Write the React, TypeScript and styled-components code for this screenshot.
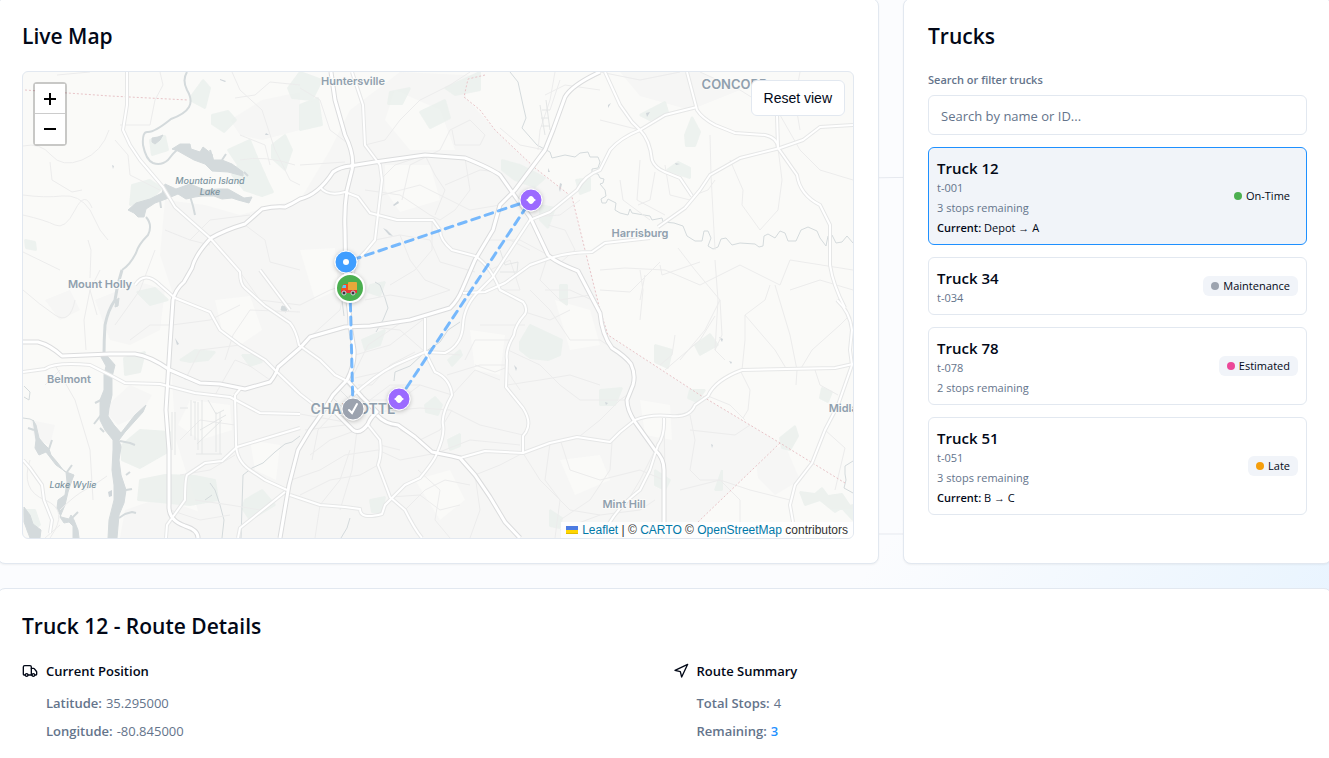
import React, { useState } from "react";
import styled, { createGlobalStyle, css } from "styled-components";
import { Navigation, Truck } from "lucide-react";

const ink = "#020817";
const muted = "#64748b";
const line = "#e2e8f0";
const primary = "#1e90ff";
const sans = '"Open Sans", "Noto Sans", "Segoe UI", sans-serif';

const GlobalStyle = createGlobalStyle`
  *, *::before, *::after { box-sizing: border-box; }
  body {
    margin: 0;
    font-family: ${sans};
    font-size: 13px;
    line-height: 20px;
    color: ${ink};
    background: #fcfdff;
  }
  h2, h3, p, ul, dl, dd { margin: 0; padding: 0; }
  ul { list-style: none; }
  button, input { font: inherit; color: inherit; }
`;

const Page = styled.main`
  position: relative;
  height: 100vh;
  overflow: hidden;
  background:
    linear-gradient(125deg, rgba(219, 238, 255, 0) 68%, rgba(219, 238, 255, 0.6) 96%),
    #fbfcfe;
`;

const Backdrop = styled.svg`
  position: absolute;
  inset: 0;
  width: 100%;
  height: 100%;
`;

const Content = styled.div`
  position: relative;
  display: flex;
  flex-direction: column;
  gap: 24px;
  margin: -2px -3px 0;
`;

const Columns = styled.div`
  display: grid;
  grid-template-columns: repeat(3, minmax(0, 1fr));
  gap: 24px;
`;

const Card = styled.section<{ $span?: number }>`
  grid-column: span ${(p) => p.$span ?? 1};
  display: flex;
  flex-direction: column;
  gap: 22px;
  padding: 24px;
  background: #fff;
  border: 1px solid ${line};
  border-radius: 8px;
  box-shadow: 0 1px 2px rgba(0, 0, 0, 0.05);
`;

const CardTitle = styled.h2`
  font-size: 21px;
  font-weight: 600;
  line-height: 26px;
`;

const MapFrame = styled.div`
  position: relative;
  height: 468px;
  border: 1px solid ${line};
  border-radius: 6px;
  overflow: hidden;
  background: #fafaf8;
`;

const MapCanvas = styled.svg`
  display: block;
  width: 100%;
  height: 100%;
`;

const ZoomControl = styled.div`
  position: absolute;
  top: 10px;
  left: 10px;
  display: flex;
  flex-direction: column;
  border: 2px solid rgba(0, 0, 0, 0.2);
  border-radius: 4px;
  background-clip: padding-box;
`;

const ZoomButton = styled.button`
  display: grid;
  place-items: center;
  width: 30px;
  height: 30px;
  padding: 0;
  border: 0;
  background: #fff;
  color: #000;
  &:first-child {
    border-bottom: 1px solid #ccc;
  }
`;

const ResetButton = styled.button`
  position: absolute;
  top: 8px;
  right: 8px;
  height: 36px;
  padding: 0 12px;
  border: 1px solid ${line};
  border-radius: 6px;
  background: #fff;
  font-family: "Liberation Sans", Arial, sans-serif;
  font-size: 14px;
`;

const Attribution = styled.div`
  position: absolute;
  right: 0;
  bottom: 0;
  padding: 0 5px;
  background: rgba(255, 255, 255, 0.8);
  color: #333;
  font-family: "Liberation Sans", Arial, sans-serif;
  font-size: 12px;
  line-height: 16px;
  a {
    color: #0078a8;
    text-decoration: none;
  }
  svg {
    display: inline;
    margin-right: 4px;
  }
`;

const Panel = styled.div`
  display: flex;
  flex-direction: column;
  gap: 12px;
`;

const Field = styled.div`
  display: flex;
  flex-direction: column;
  gap: 6px;
`;

const FieldLabel = styled.label`
  font-size: 11px;
  font-weight: 600;
  line-height: 18px;
  color: ${muted};
`;

const SearchInput = styled.input`
  width: 100%;
  height: 40px;
  padding: 2px 12px 0;
  border: 1px solid ${line};
  border-radius: 6px;
  background: #fff;
  &::placeholder {
    color: ${muted};
    opacity: 1;
  }
`;

const TruckList = styled.ul`
  display: flex;
  flex-direction: column;
  gap: 12px;
`;

const TruckCard = styled.button<{ $active: boolean }>`
  display: flex;
  align-items: center;
  justify-content: space-between;
  width: 100%;
  padding: 0 8px;
  border: 1px solid ${line};
  border-radius: 6px;
  background: #fff;
  text-align: left;
  font-size: 11px;
  ${(p) =>
    p.$active &&
    css`
      border-color: ${primary};
      background: #f1f4f9;
    `}
`;

const TruckText = styled.span`
  display: flex;
  flex-direction: column;
  padding: 10px 0 6px;
`;

const TruckName = styled.span`
  font-size: 15px;
  font-weight: 600;
`;

const Faint = styled.span`
  color: ${muted};
`;

const Strong = styled.span`
  font-weight: 600;
`;

const Badge = styled.span`
  display: flex;
  align-items: center;
  gap: 4px;
  padding: 0 8px;
  border-radius: 6px;
  background: #f1f4f9;
`;

const Dot = styled.span<{ $color: string }>`
  width: 8px;
  height: 8px;
  border-radius: 50%;
  background: ${(p) => p.$color};
`;

const Details = styled.div`
  display: grid;
  grid-template-columns: repeat(2, minmax(0, 1fr));
  gap: 16px;
`;

const DetailHeading = styled.h3`
  display: flex;
  align-items: center;
  gap: 8px;
  margin-bottom: 12px;
  font-size: 13px;
  font-weight: 600;
  line-height: 20px;
`;

const DetailList = styled.dl`
  display: flex;
  flex-direction: column;
  gap: 8px;
  padding-left: 24px;
  color: ${muted};
`;

const DetailRow = styled.div`
  display: flex;
  gap: 4px;
  dt { font-weight: 600; }
`;

const Accent = styled.span`
  color: ${primary};
  font-weight: 600;
`;

interface TruckInfo {
  id: string;
  name: string;
  stops?: number;
  current?: string;
  status: string;
  color: string;
}

const trucks: TruckInfo[] = [
  { id: "t-001", name: "Truck 12", stops: 3, current: "Depot → A", status: "On-Time", color: "#4caf50" },
  { id: "t-034", name: "Truck 34", status: "Maintenance", color: "#9ca3af" },
  { id: "t-078", name: "Truck 78", stops: 2, status: "Estimated", color: "#ec4899" },
  { id: "t-051", name: "Truck 51", stops: 3, current: "B → C", status: "Late", color: "#f59e0b" },
];

/* Map geometry, in the map's own plane: x 23..853, y 72..538. */
const suburbs = [
  "M165 200L205 205L240 215L275 205L300 200L330 150L350 110L400 72L485 76L466 80L466 98L500 135L535 168L572 197L598 300L608 335L700 395L780 443L700 520L690 538L205 538L195 500L176 440L172 380L168 340L175 300L160 255Z",
  "M108 405L130 385L152 395L140 415L118 425L108 415Z",
  "M95 300L140 282L165 290L160 330L130 345L110 340Z",
  "M230 120L262 100L300 92L300 130L262 140L240 135Z",
  "M45 300L70 290L80 310L60 320Z",
  "M125 510L160 498L200 512L210 538L120 538Z",
  "M620 72L700 72L740 90L690 110L640 96Z",
  "M755 455L785 445L800 480L775 495L758 478Z",
  "M30 420L55 425L50 445L35 440Z",
];

const clearings = [
  "M215 300L250 296L262 330L240 345L222 330Z",
  "M190 400L230 405L232 430L200 440L178 425Z",
  "M395 90L440 110L455 150L410 150L385 120Z",
  "M500 80L545 110L520 140L490 120Z",
  "M385 165L430 165L440 200L400 212L385 190Z",
  "M470 330L505 335L500 375L475 370Z",
  "M555 300L590 310L600 345L570 350Z",
  "M300 250L335 248L338 290L315 300Z",
  "M250 440L280 445L276 480L255 470Z",
  "M640 400L670 405L672 440L645 435Z",
  "M415 480L450 470L465 500L440 520Z",
  "M560 460L600 455L610 480L575 495Z",
];

const parks = [
  "M228 150L250 140L256 155L268 182L273 192L262 196L244 190L232 175L238 165Z",
  "M132 185L150 180L162 188L150 200L130 205Z",
  "M192 95L203 80L210 88L205 108L190 100Z",
  "M212 115L228 111L236 120L224 132L212 124Z",
  "M150 140L165 136L168 150L152 155Z",
  "M272 145L285 135L292 150L285 170L272 158Z",
  "M288 88L300 72L322 80L312 100L292 98Z",
  "M124 358L145 352L140 372L125 375Z",
  "M122 445L140 430L170 432L168 452L140 468L122 460Z",
  "M140 480L165 475L195 476L215 480L218 500L190 505L160 502L138 500Z",
  "M180 360L195 350L215 352L208 360L190 362Z",
  "M242 355L258 355L262 362L250 366Z",
  "M245 500L262 490L275 505L250 520L242 508Z",
  "M137 292L155 288L168 300L150 305Z",
  "M300 105L318 98L322 125L300 130Z",
  "M390 92L410 88L402 104L388 104Z",
  "M420 112L445 100L450 118L430 128Z",
  "M445 88L480 72L480 90L455 95Z",
  "M502 160L520 165L545 178L535 187L515 180L502 170Z",
  "M540 205L555 208L548 228L540 220Z",
  "M520 342L530 325L545 332L562 340L560 355L548 360L530 358L520 350Z",
  "M560 285L567 285L567 305L560 300Z",
  "M448 360L460 350L462 355L452 366Z",
  "M362 340L385 330L380 345L365 350Z",
  "M425 405L435 397L442 405L438 415L426 412Z",
  "M370 285L385 282L380 296L368 292Z",
  "M685 135L692 117L700 132L695 146L686 146Z",
  "M667 170L678 162L690 168L690 178L672 172Z",
  "M640 115L665 102L668 112L650 120Z",
  "M695 345L710 334L718 345L700 355Z",
  "M655 345L672 350L668 368L655 362Z",
  "M690 390L705 390L697 402L688 398Z",
  "M780 438L795 426L798 436L790 450L782 448Z",
  "M822 388L832 392L828 402L820 398Z",
  "M800 492L815 494L822 488L828 496L842 494L850 506L853 505L853 520L842 508L835 512L820 500L805 505Z",
  "M550 510L562 518L560 528L550 526Z",
  "M600 390L622 388L615 405L600 405Z",
  "M448 440L460 434L460 446L450 450Z",
  "M23 510L35 510L40 525L28 532Z",
  "M25 240L35 242L36 250L26 248Z",
  "M576 180L590 178L590 190L580 194Z",
  "M655 470L670 480L665 490L655 485Z",
  "M715 490L722 470L722 490Z",
  "M370 500L385 497L382 512L372 512Z",
];

const lakes = [
  "M172 149L180 144L190 144L191 149L200 152L203 147L212 154L213 160L222 160L232 164L243 172L243 176L228 172L212 171L205 164L194 160L185 155L178 151Z",
  "M128 210L136 203L150 199L162 193L165 184L176 189L190 184L205 190L219 189L228 189L244 198L252 197L249 203L238 200L232 198L222 199L214 196L202 196L195 197L186 199L178 194L166 199L155 203L146 209L144 217L138 217L134 213Z",
  "M104 352L108 357L115 365L112 377L112 395L109 408L108 416L114 425L121 433L135 415L146 405L143 412L134 422L125 432L119 440L121 447L119 460L121 475L126 490L124 503L119 515L117 538L108 538L109 520L114 500L114 485L112 470L113 450L113 440L105 430L100 420L100 400L104 390L104 375L106 366L101 357Z",
  "M33 420L36 440L35 448L39 455L46 452L56 465L66 472L67 482L65 495L58 500L57 508L61 517L69 519L71 515L74 520L78 530L79 538L73 538L73 526L69 522L64 523L60 517L65 505L68 492L72 480L74 475L64 471L57 462L51 455L49 449L43 443L39 438L36 425Z",
  "M24 507L30 515L33 524L41 530L40 538L30 538L24 522Z",
  "M152 138L158 137L163 135L160 140L155 144L152 142Z",
  "M282 306L287 307L286 312L281 310Z",
  "M116 300L119 298L118 306L115 307Z",
];

const rivers = [
  { d: "M187 72Q182 80 187 90Q193 100 189 107Q185 114 171 119Q155 132 148 132Q142 131 143 145Q146 160 153 163Q161 166 168 160Q173 153 178 149", w: 2 },
  { d: "M146 217Q153 225 148 235Q138 245 136 253Q130 265 122 270", w: 2 },
  { d: "M122 270Q117 285 115 300Q108 310 105 325Q104 340 104 355", w: 3 },
  { d: "M120 441L130 443L135 445M119 518L125 514L132 512L136 513", w: 2 },
  { d: "M23 418L30 419L34 421M24 386L30 392L29 400L24 397", w: 1 },
];

const creeks = [
  "M510 72L518 82L523 105L526 118L522 128L537 145L550 152L552 158L565 155L575 157L580 153L588 152L590 157L598 157L600 162L598 168L592 169L592 173L598 174L600 178L604 179L603 183L600 184L605 190L606 196L601 199L602 203L606 203L608 199L616 203L615 210L620 213L628 215L630 209L632 213L650 216L652 220L662 218L663 222L674 223L683 226L687 236L695 241L702 241L704 231L708 231L711 238L708 246L713 249L718 247L721 239L726 238L732 245L740 243L755 244L759 247L763 246L764 236L768 234L775 238L780 231L785 233L788 241L796 241L801 230L808 227L817 231L820 238L826 246L828 236L832 235L836 243L842 242L847 236L853 243",
  "M241 538L243 475L252 468L263 463L275 452L285 444L292 442L300 436",
  "M222 538L224 520L220 505L215 490L210 483M205 500L212 495M350 518L347 528L341 538",
  "M853 461L845 466L845 474L846 480L844 488L853 493M394 381L395 372L410 366L425 352L440 342L448 330L460 322",
  "M375 282L380 285L385 298L388 308L383 320L376 332M342 300L344 316",
];

const minor = [
  "M23 215Q45 220 55 225T75 210T92 208",
  "M23 252L60 270M50 162L52 180L72 192L82 190M23 146Q40 142 51 155T82 160T109 130",
  "M23 195Q45 198 62 196T90 210L100 230L108 240",
  "M90 278L91 250L88 240M57 75L90 72M160 72L163 85L155 100L150 125L120 125",
  "M115 140L128 155L130 175L160 190M90 290L84 320L86 350M23 290Q40 305 55 315T75 300",
  "M100 270L90 290L97 315M55 365L75 400L90 450L93 500M45 385L60 370",
  "M60 510Q75 495 85 490T107 476M30 460Q20 490 45 500T50 538M45 538L60 525",
  "M115 325L140 290L155 250M165 230L190 240L210 245M130 340L150 325L172 325",
  "M232 72L240 90L262 110L275 150L290 180L300 185M235 98L255 95L270 82L300 85M240 135L265 145L270 165",
  "M240 160Q265 155 295 165M190 240L210 220L250 215M245 225L265 240L270 262L300 270",
  "M172 325L210 320L240 305M240 272L260 300L300 305M225 360L233 335L250 310L300 312",
  "M185 380L200 350L240 345M215 395L235 360L250 366L270 380M180 440L200 420L235 425",
  "M180 475L210 470L235 455M195 500L230 505L260 510M170 510L200 520L230 515",
  "M300 88L320 100L330 130L350 145M365 145L385 140L400 120L420 100L450 85L470 72",
  "M402 200L410 165L440 150L450 130L470 120L485 135L480 145L455 145L452 130M300 165L345 162",
  "M365 190L400 195L430 215L440 220M380 180L395 165L425 155L435 175L445 190L435 215M445 185L480 170L500 172",
  "M382 195L420 185L470 210L500 205M400 235L430 240L440 262L475 272M375 240L400 235L410 260L425 280L450 290",
  "M432 220L432 250L415 270L390 285M465 158L470 190L455 210L440 220M545 150L520 145L500 128",
  "M555 72L550 100L540 130L538 150M545 95L565 85L600 90M550 110L560 80",
  "M310 337L340 310L346 280M300 305L330 290L345 285M365 300L390 295L420 300L450 290M352 325L400 330L425 352",
  "M355 355L390 345L425 318M355 378L390 370L425 352L460 355M370 400L390 385L420 385L452 395M352 378L368 345L405 320",
  "M358 385L372 385L390 365L415 352M362 400L400 400L420 385M375 412L420 408L450 410L480 425L523 435",
  "M437 453L470 440L520 445M452 395L475 370L500 380M447 375L480 365L508 365M465 360L475 340L510 340M480 325L525 325",
  "M475 365L495 372L505 368L520 390M300 414L345 422M305 430L345 425M310 455L330 440L357 430L352 470L340 510",
  "M291 480L320 470L345 455L378 450L400 460L437 453M300 495L330 480L360 475L378 465M315 538L320 505L340 480L350 450",
  "M335 412L318 430L312 460M390 497L420 495L440 510L460 505M405 510L425 490L445 480L470 485M418 470L440 490L435 520L450 538",
  "M470 538L480 510L475 475L500 465L523 453M550 443L545 480L560 500L555 538M523 453L540 480L570 510L600 515L640 510L655 500",
  "M560 439L570 470L600 480L640 470L664 480M612 442L610 470L590 500L560 520M580 436L600 420L620 400L627 395",
  "M508 350L540 365L560 385L580 400L627 400M530 290L550 310L570 340L600 340L612 348M507 385L540 380L570 375L600 385",
  "M548 255L540 280L560 300L590 295M525 312L550 320L570 310M592 300L570 290L545 290M475 255L490 240L520 240L548 255",
  "M510 240L530 250M490 270L510 260L520 290L500 290M560 263L575 250L565 230L548 225M530 217L560 215L580 200",
  "M600 120L640 130M620 180L623 200L650 220M655 172L650 200L638 205M640 160L637 200L665 215",
  "M710 135L711 175L715 250M730 160L743 190L742 205L760 230L778 210L782 180L778 148M692 196L708 190L715 180",
  "M600 72L640 80L680 72M700 72L740 90L780 115M780 115L800 150L820 170L853 180M800 72L795 100L800 130",
  "M665 165L670 195L690 200M678 248L695 270L720 300L705 330L680 360M600 270L625 268L665 270L700 285L740 265",
  "M600 290L630 292L660 262M715 260L718 300L715 350L725 360M740 265L780 285L790 260L853 270M770 285L765 300L745 315L745 340L742 370",
  "M745 315L775 350L787 370M775 285L790 335L797 370L796 385M720 300L722 335L715 350M740 370L750 390L748 410L743 418",
  "M640 320L643 290L640 270M675 335L672 355L660 365M708 396L730 405L745 420M664 415L665 480M690 415L695 440L690 470L700 480L720 480L740 500L740 538",
  "M690 430L735 435L750 425M655 450L640 480L625 505M560 530L600 515M640 300L645 275M815 370L820 385L838 395M825 430L845 448L835 490",
  "M660 265L662 275L700 262M800 370L812 350L840 325L850 315M680 490L720 480L750 490L790 500",
  "M665 370L700 340L715 316M853 290L820 280L790 290M400 430L420 440L440 430L452 410M380 445L400 450",
];

const streets = [
  "M172 412V450M175 412V455M191 400V436M195 402V440M198 402V450M202 400V454M216 412V452M220 412V454M193 402H196M200 430L226 415M197 444L222 420M180 408H188M196 454H222M208 400L216 414L224 410",
  "M500 250L505 265L518 262L517 272L500 272M330 395L345 410M338 388L356 406M345 382L362 400M365 415L355 405M340 420L352 408",
  "M540 105L545 135M546 100L550 130M542 110H550M541 118H549M541 126H549",
];

const roads = [
  "M127 72L127 105L123 130L130 145L140 160L163 187L175 207L210 238L240 272Q240 284 245 288L265 306L290 323Q296 330 299 345L320 360L335 375L347 381",
  "M352 72L363 105L365 145L380 165L382 180L375 240L365 252L355 262L349 295",
  "M320 187Q328 197 345 192L358 197L370 213L397 220L433 220L440 230Q440 240 452 250L475 256Q490 265 500 290L523 302Q528 308 525 314Q515 325 514 335Q505 350 507 360L506 387L523 408Q532 422 526 432L523 436L523 452",
  "M350 398Q375 375 395 365L425 352L445 353Q462 345 463 325T480 290L492 278L530 220L550 212L577 190Q585 175 600 170L610 150Q620 138 640 130L665 115L697 107",
  "M463 293L485 292L505 283L530 265L550 258Q570 252 592 252L605 243L650 238M658 227L685 208L700 190L710 175L740 158L780 148L803 140L820 127L853 125",
  "M605 72L620 105L632 122L640 130Q650 140 652 160Q655 168 665 172L680 178L692 196",
  "M687 72L697 110Q702 118 715 125L735 133L765 135Q778 138 778 148L797 175Q800 195 820 205L830 225L830 265Q833 285 845 308",
  "M777 115L778 148",
  "M837 300Q850 312 852 330L850 350L852 365L838 405L825 430L812 463L795 485L790 505L793 522",
  "M23 372L45 369Q55 362 90 365L110 375L125 383L160 384L195 393L230 397L260 413L300 414",
  "M135 285Q145 270 160 285L175 298L210 312L220 330L240 345L265 360L277 372L300 394L318 408",
  "M235 395L236 440Q235 460 250 470L265 480L287 490M290 495L320 505L345 507L360 509Q360 520 382 514L385 505L405 485L420 478Q435 460 437 453Q445 435 443 425T452 395Q450 378 435 372L425 352L425 318",
  "M166 538L167 525L185 500Q185 480 187 475L205 463L222 461L237 447L270 437L300 428",
  "M238 538L240 528L285 492M235 395L241 388M290 310L260 270",
  "M368 425L380 440Q382 455 378 465L390 497L405 510Q415 530 422 538",
  "M460 458L485 451L523 453L550 443L577 437L610 442L620 432L635 420Q650 414 670 416T695 405L708 396Q715 380 742 370L835 368L853 364",
  "M664 418Q665 435 658 445L650 470L640 490Q620 505 608 525",
  "M23 460L30 468L42 485L44 500L52 520L50 533",
];

const highways = [
  "M198 538Q198 530 185 526Q168 520 169 505L169 450L166 410L170 345L173 300Q175 290 184 282L192 268Q195 255 211 238Q225 230 245 224L262 209Q275 206 285 207Q292 204 300 199Q318 195 333 172Q340 167 350 166L375 162L425 155L465 158Q490 168 500 175L512 192L530 217L548 255Q555 262 578 271L600 313Q602 335 612 348Q625 356 631 364Q636 375 633 385L627 400Q627 410 635 422L655 450Q664 458 664 470V538",
  "M331 72L335 100L345 135Q355 155 352 170L347 190Q344 210 345 230L346 290Q350 310 350 325L354 350Q355 365 347 380L333 395L322 413L310 430L298 450L289 485L280 538",
  "M23 342H38Q50 345 62 356L110 354H135Q150 356 170 370L200 383L220 384L245 389L270 382Q276 375 278 367L300 348L310 337L345 327L370 326L410 320L450 308Q458 300 462 290L475 260L493 230L500 205L515 190L545 150L553 130L565 97Q572 85 600 72",
  "M348 381L362 397L377 412Q370 418 368 424Q360 435 353 430L335 412M377 415Q385 424 398 425L415 437L432 452L452 456L460 458L475 475L490 497L505 522L520 538",
];

const borders = [
  "M25 90L110 96L188 100",
  "M485 75L468 79L464 97L480 110L495 130L535 168L572 197L585 250L600 310L608 335L700 395L780 443L845 483",
  "M780 443L697 523",
];

const places = [
  { x: 353, y: 85, text: "Huntersville", size: 11 },
  { x: 735, y: 89, text: "CONCORD", size: 13 },
  { x: 640, y: 237, text: "Harrisburg", size: 11 },
  { x: 100, y: 288, text: "Mount Holly", size: 11 },
  { x: 69, y: 383, text: "Belmont", size: 11 },
  { x: 353, y: 414, text: "CHARLOTTE", size: 14 },
  { x: 624, y: 508, text: "Mint Hill", size: 11 },
  { x: 850, y: 412, text: "Midland", size: 11 },
];

const MapDrawing = () => (
  <MapCanvas viewBox="23 72 830 466" preserveAspectRatio="xMidYMid slice" role="img" aria-label="Route map of the Charlotte area">
    <g fill="#f6f6f5">{suburbs.map((d) => <path key={d} d={d} />)}</g>
    <g fill="#fafaf8">{clearings.map((d) => <path key={d} d={d} />)}</g>
    <g fill="#ecf1ee" opacity="0.9" stroke="#ecf1ee" strokeWidth="2" strokeLinejoin="bevel">
      {parks.map((d) => <path key={d} d={d} />)}
    </g>
    <g fill="#d4dadc" stroke="#d4dadc" strokeWidth="1">{lakes.map((d) => <path key={d} d={d} />)}</g>
    <g fill="none" stroke="#d4dadc" strokeLinejoin="round">
      {rivers.map((r) => <path key={r.d} d={r.d} strokeWidth={r.w} />)}
      {creeks.map((d) => <path key={d} d={d} strokeWidth="1" />)}
      <path
        strokeWidth="2"
        d="M190 196L193 206L195 215M160 200L161 208M213 160L210 150M222 160L226 154M101 400L95 403M101 415L94 424M104 432L100 428M126 475L130 472M126 490L132 489M49 449L52 440M67 472L72 465M78 512L70 520M34 430L28 428M244 172L248 176"
      />
    </g>
    <g fill="#d0d6da">
      <path d="M220 79l6 2l-1 1l-5-2zM112 165l2 1l-1 3zM266 133l3 2h-4zM560 183l2 1l-2 8l-1-3zM608 105l3-2l-3 5zM646 113l4-1l-3 5zM675 163l5 1l-4 1zM719 337l4 2l-1 3zM729 361l3 1l-1 2zM383 228l4 2l6 6l-4-1zM393 205l5-4l1 2l-5 3zM548 168l2 4h-2zM175 338l4 6l-2 1zM108 492l4-2v6l-3 1zM605 402l3 1l-2 2zM711 444l2 1l-1 3zM514 365l3 3l-1 3z" />
    </g>
    <g fill="none" stroke="#ececec" strokeWidth="1" strokeLinejoin="round">
      {minor.map((d) => <path key={d} d={d} />)}
    </g>
    <g fill="none" stroke="#e4e6e6" strokeWidth="1">{streets.map((d) => <path key={d} d={d} />)}</g>
    <g fill="none" stroke="#e8c4c8" strokeWidth="1" strokeDasharray="2 2">{borders.map((d) => <path key={d} d={d} />)}</g>
    <g fill="none" strokeLinejoin="round">
      <g stroke="#e6e7e7" strokeWidth="4">{roads.map((d) => <path key={d} d={d} />)}</g>
      <g stroke="#dbdcdd" strokeWidth="5">{highways.map((d) => <path key={d} d={d} />)}</g>
      <g stroke="#fff" strokeWidth="2">{roads.map((d) => <path key={d} d={d} />)}</g>
      <g stroke="#fff" strokeWidth="3">{highways.map((d) => <path key={d} d={d} />)}</g>
    </g>
    <g
      fill="#90a0ae"
      fontFamily='Inter, "Open Sans", sans-serif'
      fontWeight="600"
      textAnchor="middle"
      stroke="#fafaf8"
      strokeWidth="2"
      paintOrder="stroke"
    >
      {places.map((p) => <text key={p.text} x={p.x} y={p.y} fontSize={p.size}>{p.text}</text>)}
    </g>
    <g fill="#7d95a1" fontFamily='Inter, "Open Sans", sans-serif' fontSize="9" fontWeight="500" fontStyle="italic" textAnchor="middle">
      <text x="210" y="184">Mountain Island</text>
      <text x="210" y="195">Lake</text>
      <text x="73" y="488">Lake Wylie</text>
    </g>
    <path
      d="M353 409L350 288L346 262L531 200L399 399"
      fill="none"
      stroke="#409eff"
      strokeOpacity="0.7"
      strokeWidth="3"
      strokeDasharray="8 6"
      strokeLinecap="round"
      strokeLinejoin="round"
    />
    <defs>
      <filter id="pin" x="-50%" y="-50%" width="200%" height="200%">
        <feDropShadow dx="0" dy="1" stdDeviation="2" floodColor="#000" floodOpacity="0.25" />
      </filter>
    </defs>
    <g stroke="#fff" strokeWidth="1" filter="url(#pin)">
      <circle cx="353" cy="409" r="11" fill="#9ca3af" />
      <circle cx="346" cy="262" r="11" fill="#409eff" />
      <circle cx="531" cy="200" r="11" fill="#9b6bff" />
      <circle cx="399" cy="399" r="11" fill="#9b6bff" />
    </g>
    <path d="M349 410L352 413L357 404" fill="none" stroke="#fff" strokeWidth="2" strokeLinecap="round" />
    <circle cx="346" cy="262" r="3" fill="#fff" />
    <path d="M526 200Q528 199 529 197Q531 195 533 197Q534 199 536 200Q534 201 533 203Q531 205 529 203Q528 201 526 200Z" fill="#fff" />
    <path d="M394 399Q396 398 397 396Q399 394 401 396Q402 398 404 399Q402 400 401 402Q399 404 397 402Q396 400 394 399Z" fill="#fff" />
    <circle cx="350" cy="288" r="14" fill="#4caf50" stroke="#fff" strokeWidth="2" filter="url(#pin)" />
    <rect x="348" y="282" width="9" height="9" rx="1" fill="#e9a83b" />
    <path d="M341 290L342 286Q343 284 345 284H348V290Z" fill="#f4511e" />
    <path d="M342 288L343 285H346V288Z" fill="#5cc8f5" />
    <path d="M341 290H357V293H341Z" fill="#e53935" />
    <g fill="#37353f" stroke="#cfd3dc" strokeWidth="1">
      <circle cx="344" cy="293" r="2" />
      <circle cx="353" cy="293" r="2" />
    </g>
  </MapCanvas>
);

const LiveMap = () => (
  <Card $span={2}>
    <CardTitle>Live Map</CardTitle>
    <MapFrame>
      <MapDrawing />
      <ZoomControl>
        <ZoomButton type="button" aria-label="Zoom in">
          <svg width="12" height="12" viewBox="0 0 12 12"><path d="M6 0V12M0 6H12" stroke="currentColor" strokeWidth="2" /></svg>
        </ZoomButton>
        <ZoomButton type="button" aria-label="Zoom out">
          <svg width="12" height="12" viewBox="0 0 12 12"><path d="M0 6H12" stroke="currentColor" strokeWidth="2" /></svg>
        </ZoomButton>
      </ZoomControl>
      <ResetButton type="button">Reset view</ResetButton>
      <Attribution>
        <a href="#leaflet">
          <svg width="12" height="8" viewBox="0 0 12 8" aria-hidden="true">
            <path fill="#4C7BE1" d="M0 0h12v4H0z" />
            <path fill="#FFD500" d="M0 4h12v3H0z" />
            <path fill="#E0BC00" d="M0 7h12v1H0z" />
          </svg>
          Leaflet
        </a>{" "}
        | © <a href="#carto">CARTO</a> © <a href="#osm">OpenStreetMap</a> contributors
      </Attribution>
    </MapFrame>
  </Card>
);

const TruckPanel = () => {
  const [query, setQuery] = useState("");
  const [selected, setSelected] = useState("t-001");
  const q = query.toLowerCase();
  const shown = trucks.filter((t) => `${t.name} ${t.id}`.toLowerCase().includes(q));
  return (
    <Card>
      <CardTitle>Trucks</CardTitle>
      <Panel>
        <Field>
          <FieldLabel htmlFor="truck-search">Search or filter trucks</FieldLabel>
          <SearchInput
            id="truck-search"
            type="text"
            placeholder="Search by name or ID..."
            value={query}
            onChange={(e) => setQuery(e.target.value)}
          />
        </Field>
        <TruckList>
          {shown.map((t) => (
            <li key={t.id}>
              <TruckCard type="button" $active={t.id === selected} onClick={() => setSelected(t.id)}>
                <TruckText>
                  <TruckName>{t.name}</TruckName>
                  <Faint>{t.id}</Faint>
                  {t.stops && <Faint>{t.stops} stops remaining</Faint>}
                  {t.current && (
                    <span>
                      <Strong>Current:</Strong> {t.current}
                    </span>
                  )}
                </TruckText>
                <Badge>
                  <Dot $color={t.color} />
                  {t.status}
                </Badge>
              </TruckCard>
            </li>
          ))}
        </TruckList>
      </Panel>
    </Card>
  );
};

const RouteDetails = () => (
  <Card>
    <CardTitle>Truck 12 - Route Details</CardTitle>
    <Details>
      <div>
        <DetailHeading>
          <Truck size={16} />
          Current Position
        </DetailHeading>
        <DetailList>
          <DetailRow><dt>Latitude:</dt><dd>35.295000</dd></DetailRow>
          <DetailRow><dt>Longitude:</dt><dd>-80.845000</dd></DetailRow>
        </DetailList>
      </div>
      <div>
        <DetailHeading>
          <Navigation size={16} />
          Route Summary
        </DetailHeading>
        <DetailList>
          <DetailRow><dt>Total Stops:</dt><dd>4</dd></DetailRow>
          <DetailRow><dt>Remaining:</dt><dd><Accent>3</Accent></dd></DetailRow>
        </DetailList>
      </div>
    </Details>
  </Card>
);

export default function App() {
  return (
    <>
      <GlobalStyle />
      <Page>
        <Backdrop viewBox="0 0 1329 758" preserveAspectRatio="none" aria-hidden="true">
          <path d="M0 191L1329 171M0 534H1329" stroke="#e6e9ef" strokeWidth="1" fill="none" />
        </Backdrop>
        <Content>
          <Columns>
            <LiveMap />
            <TruckPanel />
          </Columns>
          <RouteDetails />
        </Content>
      </Page>
    </>
  );
}
